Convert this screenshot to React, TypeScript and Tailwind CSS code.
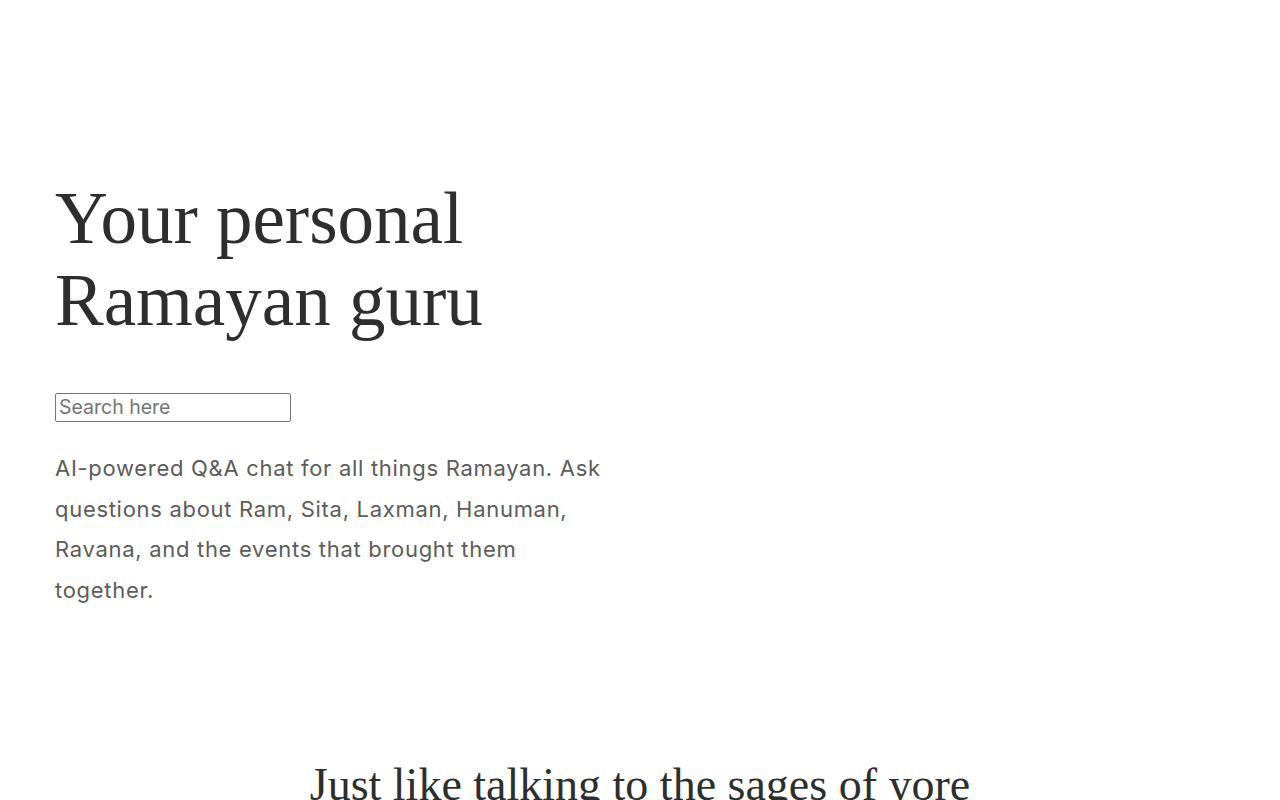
import React from 'react';

// Landing hero for the Ramayan Q&A app
const App = () => {
  return (
    <div className="min-h-screen bg-white">
      <section className="px-[55px] pt-[178px]">
        <h1 className="font-['Liberation_Serif',serif] text-[73px] leading-[82px] text-[#2e2e2e] font-normal">
          Your personal
          <br />
          Ramayan guru
        </h1>

        <input
          type="text"
          placeholder="Search here"
          className="mt-[51px] block w-[236px] h-[29px] border border-[#767676] rounded-[2px] px-[3px] font-['Inter',sans-serif] text-[19.5px] text-[#333] placeholder:text-[#757575] outline-none"
        />

        <p className="mt-[26px] w-[556px] font-['Inter',sans-serif] text-[22px] leading-[40.5px] tracking-[0.7px] text-[#5c5c5c]">
          AI-powered Q&amp;A chat for all things Ramayan. Ask questions about Ram, Sita, Laxman, Hanuman,
          Ravana, and the events that brought them together.
        </p>
      </section>

      <section className="pt-[147px] pb-20">
        <h2 className="text-center font-['Liberation_Serif',serif] text-[46px] leading-[55px] text-[#2e2e2e] font-normal">
          Just like talking to the sages of yore
        </h2>
      </section>
    </div>
  );
};

export default App;
